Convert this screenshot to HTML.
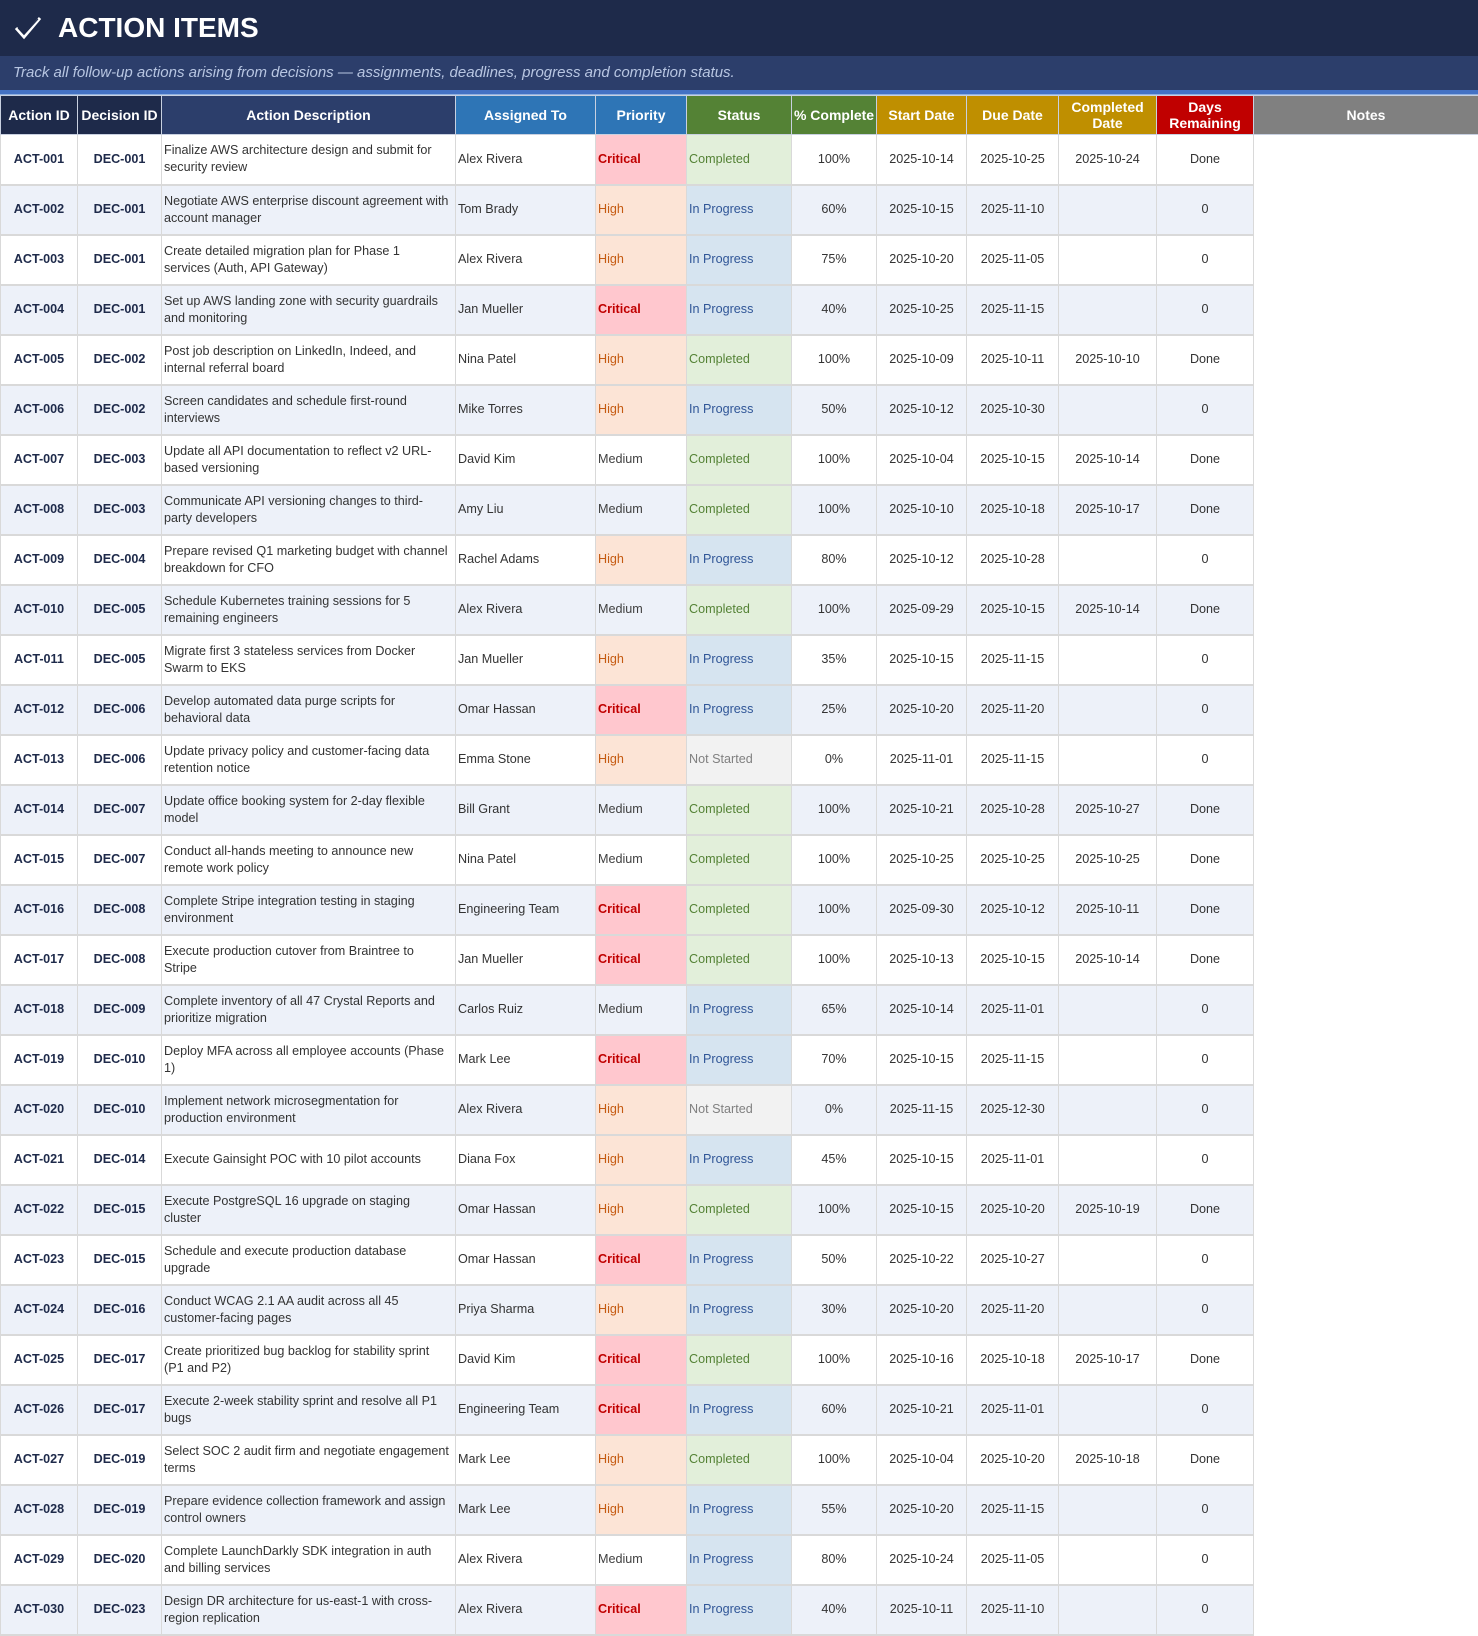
<!DOCTYPE html>
<html><head><meta charset="utf-8"><style>
*{margin:0;padding:0;box-sizing:border-box}
body{width:1478px;height:1636px;overflow:hidden;background:#fff;font-family:"Liberation Sans",Arial,sans-serif;color:#333}
.t{height:56px;background:#1e2a4a;color:#fff;font-weight:bold;font-size:28px;display:flex;align-items:center;padding-left:14px}
.t svg{margin-right:16px}
.s{height:34px;background:#2c3e6b;color:#b8c6e2;font-style:italic;font-size:15px;line-height:34px;padding-left:13px}
.l{height:5px;background:#4472c4;border-bottom:1px solid #8fb0e0}
table{border-collapse:collapse;table-layout:fixed;width:1478px}
th{height:39px;color:#fff;font-size:14px;font-weight:bold;border:1px solid #c8d0e0;line-height:16px}
td{height:50px;font-size:12.6px;border:1px solid #d9d9d9;border-bottom:2px solid #d9d9d9;text-align:center;vertical-align:middle;line-height:17px;color:#333}
td:nth-child(1),td:nth-child(2){font-weight:bold;color:#1e2a4a}
td:nth-child(3),td:nth-child(4),td:nth-child(5),td:nth-child(6){text-align:left;padding-left:2px}
td:nth-child(3){padding-right:6px}
tr:nth-child(odd) td{background:#edf1f9}
tr td:nth-child(12){background:#fff!important;border:none}
td.c{background:#ffc7ce!important;color:#c00000;font-weight:bold}
td.h{background:#fce4d6!important;color:#c55a11}
td.m{color:#404040}
td.o{background:#e2efda!important;color:#548235}
td.p{background:#d6e4f0!important;color:#2f5597}
td.x{background:#f2f2f2!important;color:#808080}
</style></head><body>
<div class="t"><svg width="28" height="26" viewBox="0 0 28 26"><path d="M2 13 L10 22 L26 3" stroke="#fff" stroke-width="3" fill="none"/><path d="M4 13 L10 19.5 L24 4" stroke="#1e2a4a" stroke-width="1" fill="none"/></svg>ACTION ITEMS</div>
<div class="s">Track all follow-up actions arising from decisions — assignments, deadlines, progress and completion status.</div>
<div class="l"></div>
<table>
<colgroup><col style="width:77px"><col style="width:84px"><col style="width:294px"><col style="width:140px"><col style="width:91px"><col style="width:105px"><col style="width:85px"><col style="width:90px"><col style="width:92px"><col style="width:98px"><col style="width:97px"><col style="width:225px"></colgroup>
<tr><th style="background:#1e2a4a">Action ID</th><th style="background:#1e2a4a">Decision ID</th><th style="background:#2c3e6b">Action Description</th><th style="background:#2e75b6">Assigned To</th><th style="background:#2e75b6">Priority</th><th style="background:#548235">Status</th><th style="background:#548235">% Complete</th><th style="background:#bf8f00">Start Date</th><th style="background:#bf8f00">Due Date</th><th style="background:#bf8f00">Completed Date</th><th style="background:#c00000">Days Remaining</th><th style="background:#808080">Notes</th></tr>
<tr><td>ACT-001</td><td>DEC-001</td><td>Finalize AWS architecture design and submit for security review</td><td>Alex Rivera</td><td class="c">Critical</td><td class="o">Completed</td><td>100%</td><td>2025-10-14</td><td>2025-10-25</td><td>2025-10-24</td><td>Done</td><td></td></tr>
<tr><td>ACT-002</td><td>DEC-001</td><td>Negotiate AWS enterprise discount agreement with account manager</td><td>Tom Brady</td><td class="h">High</td><td class="p">In Progress</td><td>60%</td><td>2025-10-15</td><td>2025-11-10</td><td></td><td>0</td><td></td></tr>
<tr><td>ACT-003</td><td>DEC-001</td><td>Create detailed migration plan for Phase 1 services (Auth, API Gateway)</td><td>Alex Rivera</td><td class="h">High</td><td class="p">In Progress</td><td>75%</td><td>2025-10-20</td><td>2025-11-05</td><td></td><td>0</td><td></td></tr>
<tr><td>ACT-004</td><td>DEC-001</td><td>Set up AWS landing zone with security guardrails and monitoring</td><td>Jan Mueller</td><td class="c">Critical</td><td class="p">In Progress</td><td>40%</td><td>2025-10-25</td><td>2025-11-15</td><td></td><td>0</td><td></td></tr>
<tr><td>ACT-005</td><td>DEC-002</td><td>Post job description on LinkedIn, Indeed, and internal referral board</td><td>Nina Patel</td><td class="h">High</td><td class="o">Completed</td><td>100%</td><td>2025-10-09</td><td>2025-10-11</td><td>2025-10-10</td><td>Done</td><td></td></tr>
<tr><td>ACT-006</td><td>DEC-002</td><td>Screen candidates and schedule first-round interviews</td><td>Mike Torres</td><td class="h">High</td><td class="p">In Progress</td><td>50%</td><td>2025-10-12</td><td>2025-10-30</td><td></td><td>0</td><td></td></tr>
<tr><td>ACT-007</td><td>DEC-003</td><td>Update all API documentation to reflect v2 URL-based versioning</td><td>David Kim</td><td class="m">Medium</td><td class="o">Completed</td><td>100%</td><td>2025-10-04</td><td>2025-10-15</td><td>2025-10-14</td><td>Done</td><td></td></tr>
<tr><td>ACT-008</td><td>DEC-003</td><td>Communicate API versioning changes to third-party developers</td><td>Amy Liu</td><td class="m">Medium</td><td class="o">Completed</td><td>100%</td><td>2025-10-10</td><td>2025-10-18</td><td>2025-10-17</td><td>Done</td><td></td></tr>
<tr><td>ACT-009</td><td>DEC-004</td><td>Prepare revised Q1 marketing budget with channel breakdown for CFO</td><td>Rachel Adams</td><td class="h">High</td><td class="p">In Progress</td><td>80%</td><td>2025-10-12</td><td>2025-10-28</td><td></td><td>0</td><td></td></tr>
<tr><td>ACT-010</td><td>DEC-005</td><td>Schedule Kubernetes training sessions for 5 remaining engineers</td><td>Alex Rivera</td><td class="m">Medium</td><td class="o">Completed</td><td>100%</td><td>2025-09-29</td><td>2025-10-15</td><td>2025-10-14</td><td>Done</td><td></td></tr>
<tr><td>ACT-011</td><td>DEC-005</td><td>Migrate first 3 stateless services from Docker Swarm to EKS</td><td>Jan Mueller</td><td class="h">High</td><td class="p">In Progress</td><td>35%</td><td>2025-10-15</td><td>2025-11-15</td><td></td><td>0</td><td></td></tr>
<tr><td>ACT-012</td><td>DEC-006</td><td>Develop automated data purge scripts for behavioral data</td><td>Omar Hassan</td><td class="c">Critical</td><td class="p">In Progress</td><td>25%</td><td>2025-10-20</td><td>2025-11-20</td><td></td><td>0</td><td></td></tr>
<tr><td>ACT-013</td><td>DEC-006</td><td>Update privacy policy and customer-facing data retention notice</td><td>Emma Stone</td><td class="h">High</td><td class="x">Not Started</td><td>0%</td><td>2025-11-01</td><td>2025-11-15</td><td></td><td>0</td><td></td></tr>
<tr><td>ACT-014</td><td>DEC-007</td><td>Update office booking system for 2-day flexible model</td><td>Bill Grant</td><td class="m">Medium</td><td class="o">Completed</td><td>100%</td><td>2025-10-21</td><td>2025-10-28</td><td>2025-10-27</td><td>Done</td><td></td></tr>
<tr><td>ACT-015</td><td>DEC-007</td><td>Conduct all-hands meeting to announce new remote work policy</td><td>Nina Patel</td><td class="m">Medium</td><td class="o">Completed</td><td>100%</td><td>2025-10-25</td><td>2025-10-25</td><td>2025-10-25</td><td>Done</td><td></td></tr>
<tr><td>ACT-016</td><td>DEC-008</td><td>Complete Stripe integration testing in staging environment</td><td>Engineering Team</td><td class="c">Critical</td><td class="o">Completed</td><td>100%</td><td>2025-09-30</td><td>2025-10-12</td><td>2025-10-11</td><td>Done</td><td></td></tr>
<tr><td>ACT-017</td><td>DEC-008</td><td>Execute production cutover from Braintree to Stripe</td><td>Jan Mueller</td><td class="c">Critical</td><td class="o">Completed</td><td>100%</td><td>2025-10-13</td><td>2025-10-15</td><td>2025-10-14</td><td>Done</td><td></td></tr>
<tr><td>ACT-018</td><td>DEC-009</td><td>Complete inventory of all 47 Crystal Reports and prioritize migration</td><td>Carlos Ruiz</td><td class="m">Medium</td><td class="p">In Progress</td><td>65%</td><td>2025-10-14</td><td>2025-11-01</td><td></td><td>0</td><td></td></tr>
<tr><td>ACT-019</td><td>DEC-010</td><td>Deploy MFA across all employee accounts (Phase 1)</td><td>Mark Lee</td><td class="c">Critical</td><td class="p">In Progress</td><td>70%</td><td>2025-10-15</td><td>2025-11-15</td><td></td><td>0</td><td></td></tr>
<tr><td>ACT-020</td><td>DEC-010</td><td>Implement network microsegmentation for production environment</td><td>Alex Rivera</td><td class="h">High</td><td class="x">Not Started</td><td>0%</td><td>2025-11-15</td><td>2025-12-30</td><td></td><td>0</td><td></td></tr>
<tr><td>ACT-021</td><td>DEC-014</td><td>Execute Gainsight POC with 10 pilot accounts</td><td>Diana Fox</td><td class="h">High</td><td class="p">In Progress</td><td>45%</td><td>2025-10-15</td><td>2025-11-01</td><td></td><td>0</td><td></td></tr>
<tr><td>ACT-022</td><td>DEC-015</td><td>Execute PostgreSQL 16 upgrade on staging cluster</td><td>Omar Hassan</td><td class="h">High</td><td class="o">Completed</td><td>100%</td><td>2025-10-15</td><td>2025-10-20</td><td>2025-10-19</td><td>Done</td><td></td></tr>
<tr><td>ACT-023</td><td>DEC-015</td><td>Schedule and execute production database upgrade</td><td>Omar Hassan</td><td class="c">Critical</td><td class="p">In Progress</td><td>50%</td><td>2025-10-22</td><td>2025-10-27</td><td></td><td>0</td><td></td></tr>
<tr><td>ACT-024</td><td>DEC-016</td><td>Conduct WCAG 2.1 AA audit across all 45 customer-facing pages</td><td>Priya Sharma</td><td class="h">High</td><td class="p">In Progress</td><td>30%</td><td>2025-10-20</td><td>2025-11-20</td><td></td><td>0</td><td></td></tr>
<tr><td>ACT-025</td><td>DEC-017</td><td>Create prioritized bug backlog for stability sprint (P1 and P2)</td><td>David Kim</td><td class="c">Critical</td><td class="o">Completed</td><td>100%</td><td>2025-10-16</td><td>2025-10-18</td><td>2025-10-17</td><td>Done</td><td></td></tr>
<tr><td>ACT-026</td><td>DEC-017</td><td>Execute 2-week stability sprint and resolve all P1 bugs</td><td>Engineering Team</td><td class="c">Critical</td><td class="p">In Progress</td><td>60%</td><td>2025-10-21</td><td>2025-11-01</td><td></td><td>0</td><td></td></tr>
<tr><td>ACT-027</td><td>DEC-019</td><td>Select SOC 2 audit firm and negotiate engagement terms</td><td>Mark Lee</td><td class="h">High</td><td class="o">Completed</td><td>100%</td><td>2025-10-04</td><td>2025-10-20</td><td>2025-10-18</td><td>Done</td><td></td></tr>
<tr><td>ACT-028</td><td>DEC-019</td><td>Prepare evidence collection framework and assign control owners</td><td>Mark Lee</td><td class="h">High</td><td class="p">In Progress</td><td>55%</td><td>2025-10-20</td><td>2025-11-15</td><td></td><td>0</td><td></td></tr>
<tr><td>ACT-029</td><td>DEC-020</td><td>Complete LaunchDarkly SDK integration in auth and billing services</td><td>Alex Rivera</td><td class="m">Medium</td><td class="p">In Progress</td><td>80%</td><td>2025-10-24</td><td>2025-11-05</td><td></td><td>0</td><td></td></tr>
<tr><td>ACT-030</td><td>DEC-023</td><td>Design DR architecture for us-east-1 with cross-region replication</td><td>Alex Rivera</td><td class="c">Critical</td><td class="p">In Progress</td><td>40%</td><td>2025-10-11</td><td>2025-11-10</td><td></td><td>0</td><td></td></tr>
</table>
</body></html>
